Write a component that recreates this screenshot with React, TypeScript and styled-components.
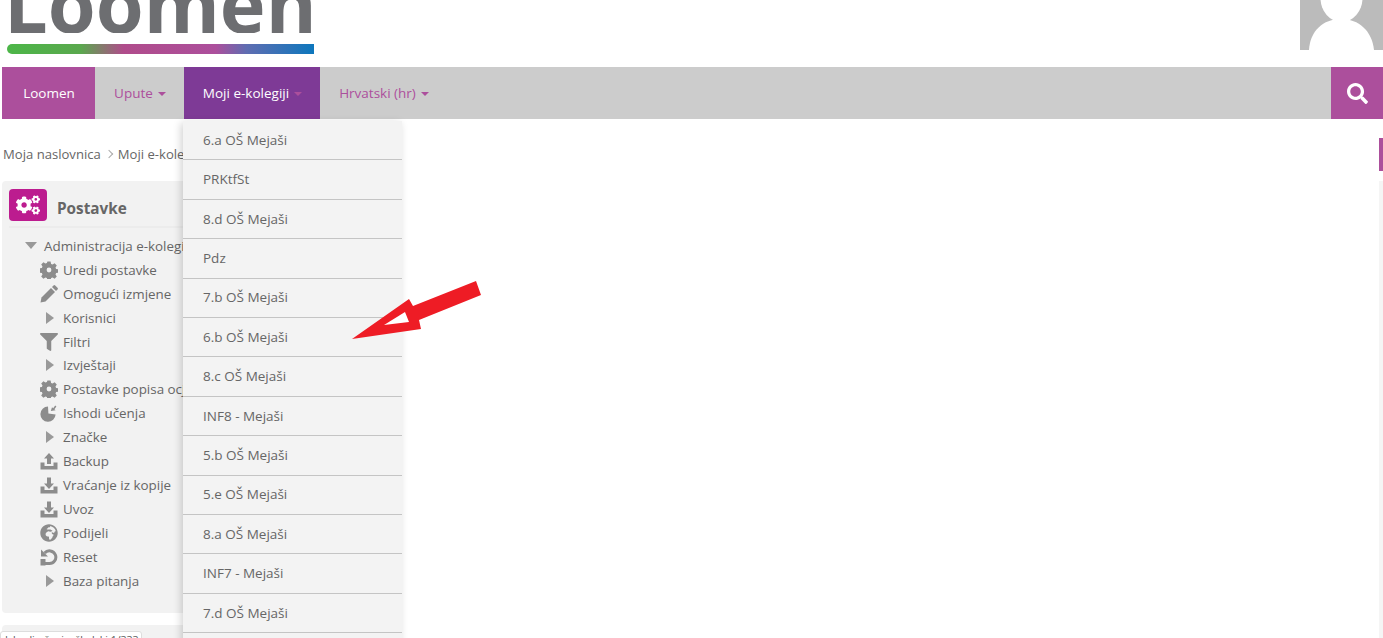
import styled, { createGlobalStyle } from 'styled-components';
import { FaCogs, FaFilter, FaGlobeAfrica, FaSearch } from 'react-icons/fa';
import type { ReactNode } from 'react';

const GlobalStyle = createGlobalStyle`
  html, body {
    margin: 0;
    background: #fff;
    height: 638px;
    overflow: hidden;
  }
  body {
    font-family: "Open Sans", "Liberation Sans", sans-serif;
    font-size: 13.5px;
    color: #666;
  }
`;

const Page = styled.div`
  position: relative;
  height: 638px;
  overflow: hidden;
  padding-left: 2px;
`;

const Header = styled.header`
  display: flex;
  justify-content: space-between;
  height: 67px;
`;

const Logo = styled.div`
  display: flex;
  flex-direction: column;
  width: 307px;
  margin-left: 5px;
  gap: 11px;
`;

const LogoClip = styled.div`
  height: 33px;
  overflow: hidden;
`;

const LogoText = styled.div`
  font-family: "Open Sans", sans-serif;
  font-weight: 700;
  font-size: 77.5px;
  line-height: 7px;
  margin-left: -3px;
  white-space: nowrap;
  color: #6d6e71;
`;

const LogoBar = styled.div`
  height: 10px;
  border-radius: 5px 0 0 5px;
  background: linear-gradient(
    90deg,
    #4cb648 0%,
    #5aa84e 24%,
    #b04c8b 38%,
    #ac4f9c 68%,
    #5f6db1 78%,
    #0d77bd 100%
  );
`;

const Avatar = styled.div`
  width: 83px;
  height: 50px;
  background: #bbb;
  overflow: hidden;
  svg {
    display: block;
  }
`;

const Nav = styled.nav`
  display: flex;
  height: 52px;
  background: #ccc;
`;

const NavItem = styled.a<{ $width: number; $bg?: string; $color?: string }>`
  display: flex;
  align-items: center;
  justify-content: center;
  gap: 5px;
  padding: 0 0 1px 1px;
  box-sizing: border-box;
  flex: 0 0 ${p => p.$width}px;
  background: ${p => p.$bg ?? 'transparent'};
  color: ${p => p.$color ?? '#ac4f9c'};
`;

const Caret = styled.span<{ $color?: string }>`
  width: 0;
  height: 0;
  margin-top: 2px;
  border-left: 4px solid transparent;
  border-right: 4px solid transparent;
  border-top: 4px solid ${p => p.$color ?? '#ac4f9c'};
`;

const SearchButton = styled.a`
  margin-left: auto;
  flex: 0 0 52px;
  display: flex;
  align-items: center;
  justify-content: center;
  background: #ac4f9c;
  color: #fff;
  font-size: 21px;
`;

const Breadcrumb = styled.div`
  display: flex;
  align-items: center;
  gap: 5px;
  height: 62px;
  padding: 8px 0 0 1px;
  box-sizing: border-box;
  font-size: 13.1px;
  color: #666;
`;

const Separator = styled.span`
  width: 5px;
  height: 5px;
  border-top: 1px solid #aaa;
  border-right: 1px solid #aaa;
  transform: rotate(45deg);
  margin-right: 1px;
`;

const SidePanel = styled.section`
  width: 300px;
  height: 432px;
  background: #f2f2f2;
  border-radius: 4px;
  padding: 8px 7px 0;
  box-sizing: border-box;
`;

const PanelHead = styled.div`
  display: flex;
  align-items: flex-start;
  gap: 10px;
  height: 37px;
  margin-bottom: 6px;
  border-bottom: 2px solid #ececec;
`;

const PanelIcon = styled.span`
  width: 38px;
  height: 32px;
  border-radius: 4px;
  background: #bc1c8f;
  color: #fff;
  font-size: 24px;
  display: flex;
  align-items: center;
  justify-content: center;
`;

const PanelTitle = styled.h2`
  margin: 7px 0 0;
  font-size: 15.3px;
  line-height: 24px;
  font-weight: 700;
  color: #666;
`;

const Tree = styled.ul`
  list-style: none;
  margin: 0;
  padding: 0;
`;

const TreeRow = styled.li<{ $root?: boolean }>`
  display: flex;
  align-items: center;
  height: 23.92px;
  font-size: 13.4px;
  padding-left: ${p => (p.$root ? 16 : 31)}px;
  white-space: nowrap;
`;

const TreeIcon = styled.span`
  flex: 0 0 23px;
  display: flex;
  align-items: center;
  color: #8c8c8c;
  font-size: 18px;
  svg {
    display: block;
  }
`;

const RootCaret = styled.span`
  width: 0;
  height: 0;
  margin-right: 7px;
  border-left: 6px solid transparent;
  border-right: 6px solid transparent;
  border-top: 7px solid #999;
`;

const BranchCaret = styled.span`
  width: 0;
  height: 0;
  margin: 0 9px 0 6px;
  border-top: 6px solid transparent;
  border-bottom: 6px solid transparent;
  border-left: 8px solid #999;
`;

const LowerPanel = styled.section`
  margin-top: 12px;
  height: 40px;
  width: 300px;
  background: #f2f2f2;
  border-radius: 4px;
  padding-top: 6px;
  box-sizing: border-box;
`;

const ClippedTag = styled.div`
  margin-left: -2px;
  width: 142px;
  height: 20px;
  box-sizing: border-box;
  background: #fff;
  border: 1px solid #ddd;
  border-radius: 3px;
  font-size: 10.5px;
  line-height: 14px;
  padding: 1px 0 0 4px;
  color: #555;
  overflow: hidden;
  white-space: nowrap;
`;

const Dropdown = styled.ul`
  position: absolute;
  left: 183px;
  top: 121px;
  width: 219px;
  margin: 0;
  padding: 0;
  list-style: none;
  background: #f3f3f3;
  box-shadow: -2px 2px 8px rgba(0, 0, 0, 0.18);
`;

const DropdownItem = styled.li`
  height: 39.42px;
  box-sizing: border-box;
  padding: 0 0 1px 20px;
  display: flex;
  align-items: center;
  border-bottom: 1px solid #c4c4c4;
  color: #666;
`;

const SideMark = styled.div`
  position: absolute;
  right: 0;
  top: 138px;
  width: 4px;
  height: 33px;
  background: #ac4f9c;
`;

const SideStrip = styled.div`
  position: absolute;
  right: 0;
  top: 181px;
  width: 4px;
  height: 457px;
  background: #f5f5f5;
`;

const ArrowOverlay = styled.svg`
  position: absolute;
  left: 345px;
  top: 275px;
`;

const GearIcon = () => (
  <svg width="18" height="18" viewBox="0 0 18 18" fill="currentColor">
    <path
      fillRule="evenodd"
      d="M7.4 0.5h3.2l.5 2.4 1.5.6 2-1.3 2.2 2.2-1.3 2 .6 1.5 2.4.5v3.2l-2.4.5-.6 1.5 1.3 2-2.2 2.2-2-1.3-1.5.6-.5 2.4H7.4l-.5-2.4-1.5-.6-2 1.3-2.2-2.2 1.3-2-.6-1.5-2.4-.5V7.4l2.4-.5.6-1.5-1.3-2 2.2-2.2 2 1.3 1.5-.6zM9 6.6a2.4 2.4 0 1 0 0 4.8 2.4 2.4 0 0 0 0-4.8z"
    />
  </svg>
);

const PencilIcon = () => (
  <svg width="18" height="18" viewBox="0 0 18 18" fill="currentColor">
    <path d="M0.5 17.5l1-5 9.5-9.5 4 4-9.5 9.5z" />
    <path d="M12 2l1.5-1.5a1.2 1.2 0 0 1 1.7 0l2.3 2.3a1.2 1.2 0 0 1 0 1.7L16 6z" />
  </svg>
);

const OutcomeIcon = () => (
  <svg width="18" height="18" viewBox="0 0 18 18" fill="currentColor">
    <path d="M8 2.6A7.6 7.6 0 1 0 15.6 10.6L8.4 9.4z" />
    <path d="M10.8 7l1.2-3.8 1.2 1 2-2.6 1.2 1-2 2.6 1.2 1z" />
  </svg>
);

const UploadIcon = () => (
  <svg width="18" height="18" viewBox="0 0 18 18" fill="currentColor">
    <path d="M0.5 10.5h4v3.5h9v-3.5h4v7h-17z" />
    <path d="M9 1l5 5.5h-3V12H7V6.5H4z" />
  </svg>
);

const DownloadIcon = () => (
  <svg width="18" height="18" viewBox="0 0 18 18" fill="currentColor">
    <path d="M0.5 10.5h4v3.5h9v-3.5h4v7h-17z" />
    <path d="M9 13l5-5.5h-3V1.5H7v6H4z" />
  </svg>
);

const ResetIcon = () => (
  <svg width="18" height="18" viewBox="0 0 18 18" fill="none" stroke="currentColor" strokeWidth="3">
    <path d="M4.6 5A6.4 6.4 0 1 1 9 15.6H5" />
    <path d="M1 1.5v7h7z" fill="currentColor" stroke="none" />
    <path d="M0.5 11h5v6.5h-5z" fill="currentColor" stroke="none" />
  </svg>
);

type TreeEntry = { label: string; icon?: ReactNode };

const treeEntries: TreeEntry[] = [
  { label: 'Uredi postavke', icon: <GearIcon /> },
  { label: 'Omogući izmjene', icon: <PencilIcon /> },
  { label: 'Korisnici' },
  { label: 'Filtri', icon: <FaFilter /> },
  { label: 'Izvještaji' },
  { label: 'Postavke popisa ocjena', icon: <GearIcon /> },
  { label: 'Ishodi učenja', icon: <OutcomeIcon /> },
  { label: 'Značke' },
  { label: 'Backup', icon: <UploadIcon /> },
  { label: 'Vraćanje iz kopije', icon: <DownloadIcon /> },
  { label: 'Uvoz', icon: <DownloadIcon /> },
  { label: 'Podijeli', icon: <FaGlobeAfrica /> },
  { label: 'Reset', icon: <ResetIcon /> },
  { label: 'Baza pitanja' },
];

const courses = [
  '6.a OŠ Mejaši',
  'PRKtfSt',
  '8.d OŠ Mejaši',
  'Pdz',
  '7.b OŠ Mejaši',
  '6.b OŠ Mejaši',
  '8.c OŠ Mejaši',
  'INF8 - Mejaši',
  '5.b OŠ Mejaši',
  '5.e OŠ Mejaši',
  '8.a OŠ Mejaši',
  'INF7 - Mejaši',
  '7.d OŠ Mejaši',
  '',
];

export default function App() {
  return (
    <Page>
      <GlobalStyle />
      <Header>
        <Logo>
          <LogoClip>
            <LogoText>Loomen</LogoText>
          </LogoClip>
          <LogoBar />
        </Logo>
        <Avatar>
          <svg width="83" height="50" viewBox="0 0 83 50" fill="#fff">
            <ellipse cx="41.5" cy="-2" rx="21" ry="24" />
            <path d="M9 50c1-19 14-31 32-31s31 12 33 31z" />
          </svg>
        </Avatar>
      </Header>

      <Nav>
        <NavItem $width={93} $bg="#ac4f9c" $color="#fff">Loomen</NavItem>
        <NavItem $width={89}>
          Upute <Caret />
        </NavItem>
        <NavItem $width={136} $bg="#7e3a96" $color="#fff">
          Moji e-kolegiji <Caret $color="#ac4f9c" />
        </NavItem>
        <NavItem $width={127}>
          Hrvatski (hr) <Caret />
        </NavItem>
        <SearchButton>
          <FaSearch />
        </SearchButton>
      </Nav>

      <Breadcrumb>
        Moja naslovnica <Separator /> Moji e-kolegiji
      </Breadcrumb>

      <SidePanel>
        <PanelHead>
          <PanelIcon>
            <FaCogs />
          </PanelIcon>
          <PanelTitle>Postavke</PanelTitle>
        </PanelHead>
        <Tree>
          <TreeRow $root>
            <RootCaret />
            Administracija e-kolegija
          </TreeRow>
          {treeEntries.map(entry => (
            <TreeRow key={entry.label}>
              {entry.icon ? <TreeIcon>{entry.icon}</TreeIcon> : <BranchCaret />}
              {entry.label}
            </TreeRow>
          ))}
        </Tree>
      </SidePanel>

      <LowerPanel>
        <ClippedTag>Ishodi učenja: školski 1/333</ClippedTag>
      </LowerPanel>

      <Dropdown>
        {courses.map((course, i) => (
          <DropdownItem key={`${course}${i}`}>{course}</DropdownItem>
        ))}
      </Dropdown>

      <SideMark />
      <SideStrip />

      <ArrowOverlay width="145" height="70" viewBox="345 275 145 70">
        <path
          d="M352 339 L409 299 L413 306 L476 281 L481 295 L419 320 L421 329 Z"
          fill="#ee1c25"
        />
        <path d="M384 325 L405 312 L409 322 Z" fill="#fff" />
      </ArrowOverlay>
    </Page>
  );
}
